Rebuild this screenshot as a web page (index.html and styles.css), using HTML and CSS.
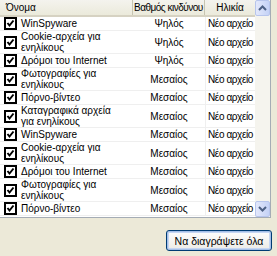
FILE: index.html
```html
<!DOCTYPE html>
<html lang="el">
<head>
  <meta charset="UTF-8" />
  <title>Λίστα</title>
  <link rel="stylesheet" href="styles.css">
</head>
<body>
  <div class="list">
    <div class="grid">
      <div class="head">
        <div class="hc c1">Όνομα</div>
        <div class="hc c2">Βαθμός κινδύνου</div>
        <div class="hc c3">Ηλικία</div>
      </div>
      <div class="rows" id="rows"></div>
    </div>
    <div class="scroll">
      <div class="sbtn"><svg width="9" height="6" viewBox="0 0 9 6"><path d="M1 5 L4.5 1.5 L8 5" fill="none" stroke="#4d6185" stroke-width="2"/></svg></div>
      <div class="track"></div>
      <div class="sbtn"><svg width="9" height="6" viewBox="0 0 9 6"><path d="M1 1 L4.5 4.5 L8 1" fill="none" stroke="#4d6185" stroke-width="2"/></svg></div>
    </div>
  </div>
  <div class="foot">
    <button class="btn">Να διαγράψετε όλα</button>
  </div>

  <script>
    const items = [
      ['WinSpyware', 'Ψηλός'],
      ['Cookie-αρχεία για ενηλίκους', 'Ψηλός'],
      ['Δρόμοι του Internet', 'Ψηλός'],
      ['Φωτογραφίες για ενηλίκους', 'Μεσαίος'],
      ['Πόρνο-βίντεο', 'Μεσαίος'],
      ['Καταγραφικά αρχεία για ενηλίκους', 'Μεσαίος'],
      ['WinSpyware', 'Μεσαίος'],
      ['Cookie-αρχεία για ενηλίκους', 'Μεσαίος'],
      ['Δρόμοι του Internet', 'Μεσαίος'],
      ['Φωτογραφίες για ενηλίκους', 'Μεσαίος'],
      ['Πόρνο-βίντεο', 'Μεσαίος']
    ];
    const check = '<svg class="chk" width="13" height="13" viewBox="0 0 13 13"><rect x="1" y="1" width="11" height="11" fill="#fff" stroke="#000" stroke-width="2"/><path d="M3.5 6 L5.5 8.5 L9.5 3.5" fill="none" stroke="#000" stroke-width="2"/></svg>';
    const rows = document.getElementById('rows');
    items.forEach(r => {
      rows.innerHTML += `<div class="row"><div class="c1 name">${check}<span>${r[0]}</span></div><div class="c2 risk">${r[1]}</div><div class="c3 age">Νέο αρχείο</div></div>`;
    });
  </script>
</body>
</html>
```

FILE: styles.css
```css
body { margin: 0; background: #ece9d8; font-family: 'Liberation Sans', Arial, sans-serif; font-size: 10px; color: #000; width: 277px; height: 256px; overflow: hidden; }
.list { display: flex; width: 271px; height: 218px; background: #fff; border-right: 1px solid #a5acb5; border-bottom: 1px solid #a5acb5; box-sizing: border-box; }
.grid { width: 255px; overflow: hidden; }
.head { display: flex; height: 17px; background: linear-gradient(#f4f3ee, #ebeadb); border-bottom: 2px solid #d6d2c2; box-sizing: border-box; }
.hc { line-height: 15px; font-size: 10px; border-right: 1px solid #c7c5b2; box-sizing: border-box; white-space: nowrap; overflow: hidden; }
.head .c1 { padding-left: 6px; }
.head .c2 { padding-left: 1px; letter-spacing: -0.5px; }
.head .c3 { text-align: center; border-right: none; }
.c1 { width: 133px; flex: none; }
.c2 { width: 72px; flex: none; }
.c3 { width: 50px; flex: none; }
.row { display: flex; align-items: center; border-bottom: 1px solid #efefef; }
.name { display: flex; align-items: center; gap: 4px; padding: 0 0 0 4px; box-sizing: border-box; min-height: 13px; }
.name span { line-height: 11px; width: 100px; }
.chk { flex: none; }
.risk { text-align: center; align-self: stretch; display: flex; align-items: center; justify-content: center; }
.age { padding-left: 2px; letter-spacing: -0.4px; white-space: nowrap; overflow: hidden; align-self: stretch; display: flex; align-items: center; border-left: 1px solid #efefef; box-sizing: border-box; }
.scroll { width: 15px; display: flex; flex-direction: column; background: #f4f3ee; }
.sbtn { height: 16px; display: flex; align-items: center; justify-content: center; background: linear-gradient(90deg, #e3e8fb, #c4d2f6); border: 1px solid #b7c5ec; border-radius: 2px; box-sizing: border-box; }
.track { flex: 1; background: #f5f4ee; }
.foot { display: flex; justify-content: flex-end; padding: 12px 5px 0 0; }
.btn { font-family: 'Liberation Sans', Arial, sans-serif; font-size: 10.5px; height: 21px; width: 106px; padding: 0; background: linear-gradient(#fefefe, #ecebe6); border: 1px solid #003c74; border-radius: 3px; box-shadow: inset 0 0 0 1px #a4bfe8, inset 0 0 0 2px #c6d6f2; color: #000; }
```
